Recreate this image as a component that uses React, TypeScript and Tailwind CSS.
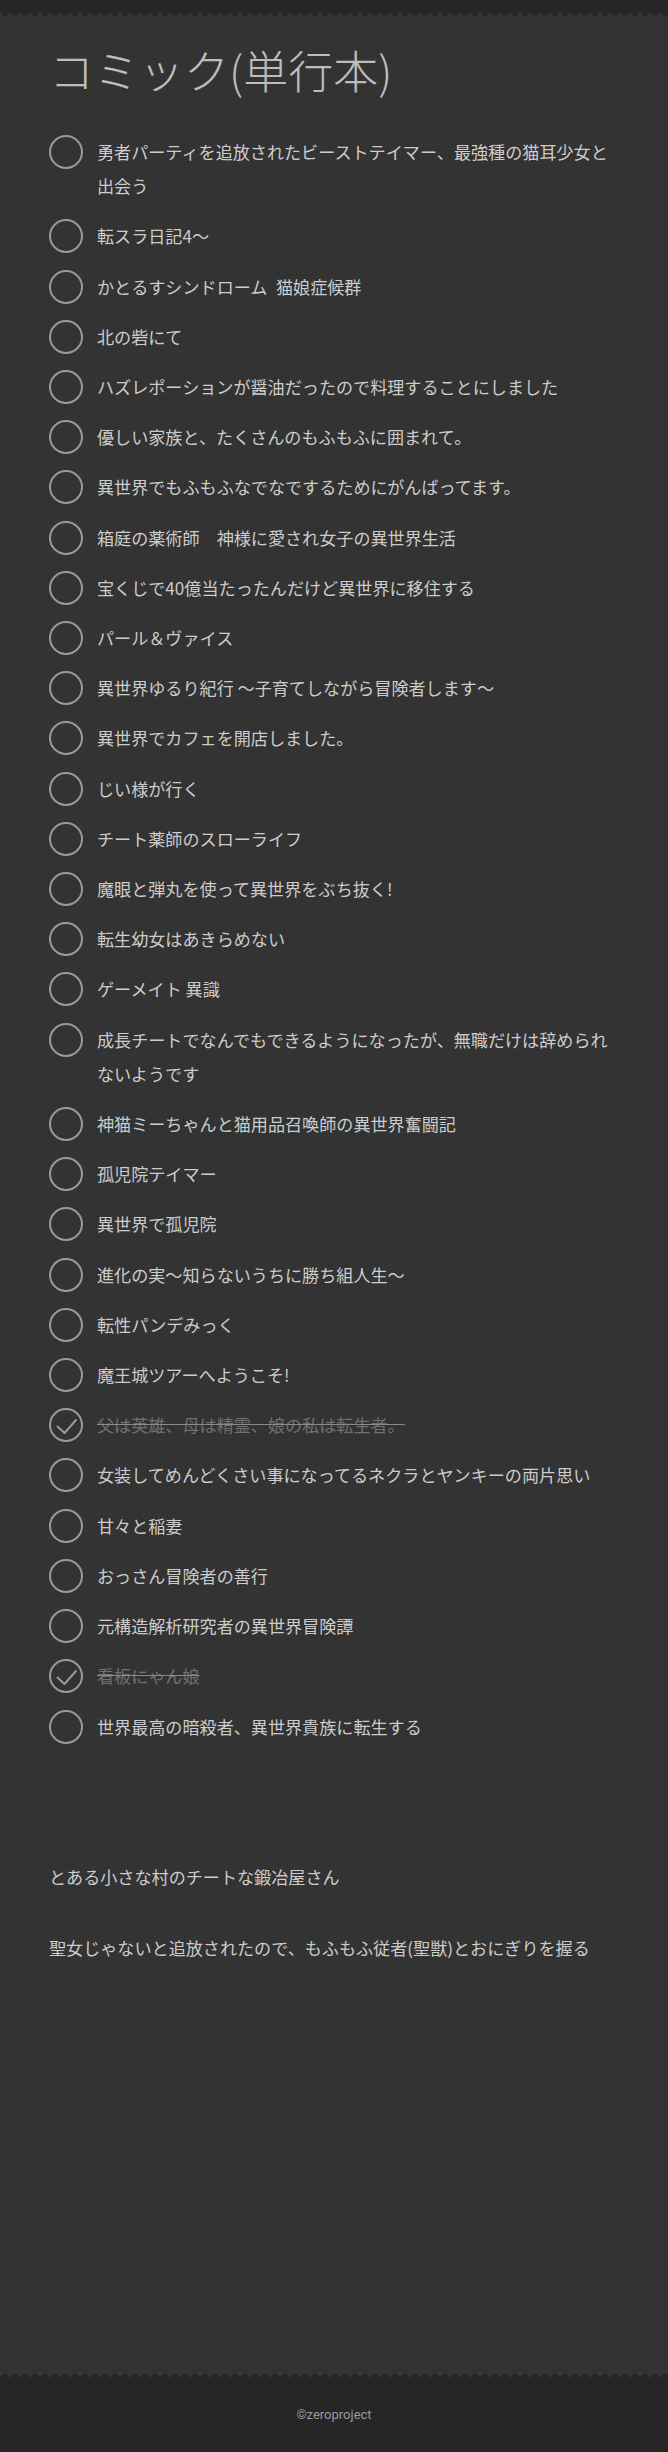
import React from "react"

type Item = { title: string; done?: boolean }

const items: Item[] = [
  { title: "勇者パーティを追放されたビーストテイマー、最強種の猫耳少女と出会う" },
  { title: "転スラ日記4〜" },
  { title: "かとるすシンドローム\u2002猫娘症候群" },
  { title: "北の砦にて" },
  { title: "ハズレポーションが醤油だったので料理することにしました" },
  { title: "優しい家族と、たくさんのもふもふに囲まれて。" },
  { title: "異世界でもふもふなでなでするためにがんばってます。" },
  { title: "箱庭の薬術師　神様に愛され女子の異世界生活" },
  { title: "宝くじで40億当たったんだけど異世界に移住する" },
  { title: "パール＆ヴァイス" },
  { title: "異世界ゆるり紀行 〜子育てしながら冒険者します〜" },
  { title: "異世界でカフェを開店しました。" },
  { title: "じい様が行く" },
  { title: "チート薬師のスローライフ" },
  { title: "魔眼と弾丸を使って異世界をぶち抜く!" },
  { title: "転生幼女はあきらめない" },
  { title: "ゲーメイト 異識" },
  { title: "成長チートでなんでもできるようになったが、無職だけは辞められないようです" },
  { title: "神猫ミーちゃんと猫用品召喚師の異世界奮闘記" },
  { title: "孤児院テイマー" },
  { title: "異世界で孤児院" },
  { title: "進化の実〜知らないうちに勝ち組人生〜" },
  { title: "転性パンデみっく" },
  { title: "魔王城ツアーへようこそ!" },
  { title: "父は英雄、母は精霊、娘の私は転生者。", done: true },
  { title: "女装してめんどくさい事になってるネクラとヤンキーの両片思い" },
  { title: "甘々と稲妻" },
  { title: "おっさん冒険者の善行" },
  { title: "元構造解析研究者の異世界冒険譚" },
  { title: "看板にゃん娘", done: true },
  { title: "世界最高の暗殺者、異世界貴族に転生する" },
]

const others = [
  "とある小さな村のチートな鍛冶屋さん",
  "聖女じゃないと追放されたので、もふもふ従者(聖獣)とおにぎりを握る",
]

function Check({ done }: { done?: boolean }) {
  return (
    <svg viewBox="0 0 34 34" className="h-[34px] w-[34px] shrink-0">
      <circle cx="17" cy="17" r="16" fill="none" stroke="#9a9a9a" strokeWidth="2" />
      {done && (
        <path
          d="M8.5 18.5l7 6.5L27 12"
          fill="none"
          stroke="#9a9a9a"
          strokeWidth="2"
          strokeLinecap="round"
          strokeLinejoin="round"
        />
      )}
    </svg>
  )
}

export default function App() {
  return (
    <div className="flex min-h-screen flex-col bg-[#333333] font-['Noto_Sans_CJK_JP','Noto_Sans',sans-serif] text-[#cccccc]">
      {/* top bar */}
      <div className="h-[13px] bg-[#262626]" />
      <div className="h-[3px] bg-[radial-gradient(circle_at_5px_0,#262626_3px,transparent_3.5px)] bg-[length:10px_3px] bg-repeat-x" />

      <main className="flex-1 px-[49px]">
        <h1 className="mt-[21px] text-[45px] leading-[66px] font-light text-[#bdbdbd]">
          コミック(単行本)
        </h1>

        <ul className="mt-[24px]">
          {items.map((item, i) => (
            <li key={i} className="flex items-start py-2 text-[17.1px] leading-[34.2px]">
              <Check done={item.done} />
              <span
                className={
                  item.done
                    ? "ml-[14px] text-[#707070] line-through decoration-[#8a8a8a]"
                    : "ml-[14px]"
                }
              >
                {item.title}
              </span>
            </li>
          ))}
        </ul>

        <div className="mt-[108px] flex flex-col gap-[37px] text-[17.1px] leading-[34.2px]">
          {others.map((t) => (
            <p key={t}>{t}</p>
          ))}
        </div>
      </main>

      {/* footer */}
      <div className="h-[3px] bg-[#333333] bg-[radial-gradient(circle_at_5px_100%,#262626_3px,transparent_3.5px)] bg-[length:10px_3px] bg-repeat-x" />
      <footer className="flex h-[75px] items-center justify-center bg-[#262626] font-['Roboto',sans-serif] text-[13px] text-[#9a9a9a]">
        ©zeroproject
      </footer>
    </div>
  )
}
